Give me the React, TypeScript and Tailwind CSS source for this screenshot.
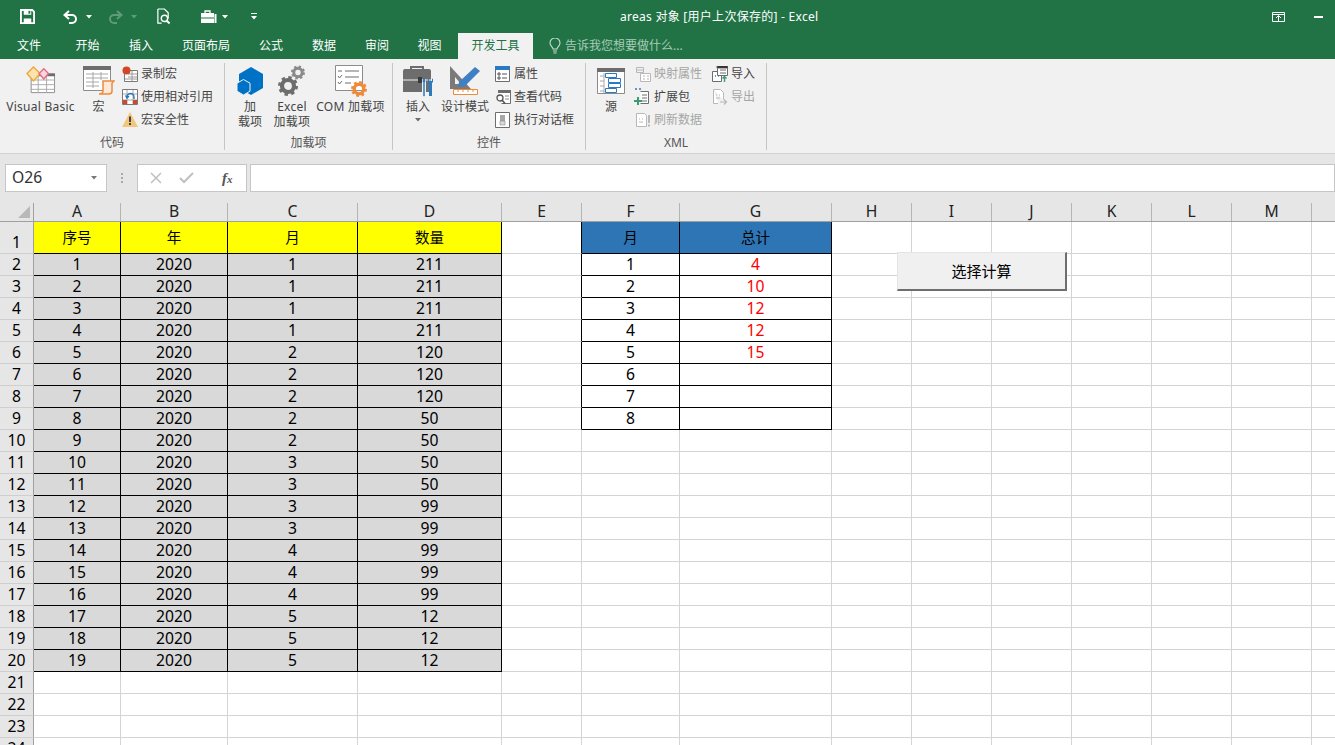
import type { ReactNode } from 'react';

const GRAY = '#6d6d6d';

const Gear = ({ x, y, r, color }: { x: number; y: number; r: number; color: string }) => (
  <g fill="none" stroke={color}>
    <circle cx={x} cy={y} r={r * 0.6} strokeWidth={r * 0.42} />
    <circle cx={x} cy={y} r={r * 0.84} strokeWidth={r * 0.32} strokeDasharray={`${r * 0.33} ${r * 0.33}`} />
  </g>
);

const Svg = ({ w, h, vw, vh, children, className }: { w: number; h: number; vw?: number; vh?: number; children: ReactNode; className?: string }) => (
  <svg width={w} height={h} viewBox={`0 0 ${vw ?? w} ${vh ?? h}`} className={className}>
    {children}
  </svg>
);

// quick access toolbar
const SaveIcon = () => (
  <Svg w={15} h={15} vw={16} vh={16}>
    <path d="M1 1h12l2 2v12H1z" fill="none" stroke="#fff" strokeWidth="2" />
    <path d="M4 1h8v5H4zM4 10h8v5H4z" fill="#fff" />
    <path d="M9 2h2v3H9z" fill="#217346" />
  </Svg>
);
const UndoIcon = ({ flip, color }: { flip?: boolean; color: string }) => (
  <Svg w={15} h={14} className={flip ? '-scale-x-100' : ''}>
    <path d="M6 1 1.5 5 6 9" fill="none" stroke={color} strokeWidth="2" />
    <path d="M2 5h7a4 4 0 0 1 4 4 4 4 0 0 1-4 4H6" fill="none" stroke={color} strokeWidth="2" />
  </Svg>
);
const PreviewIcon = () => (
  <Svg w={15} h={17} vw={16} vh={18}>
    <path d="M2 1h7l4 4v6M6 16H2V1" fill="none" stroke="#fff" strokeWidth="1.3" />
    <circle cx="9" cy="11" r="3.4" fill="none" stroke="#fff" strokeWidth="1.5" />
    <path d="m11.5 13.5 3 3" stroke="#fff" strokeWidth="2" />
  </Svg>
);
const CaseIcon = () => (
  <Svg w={18} h={14}>
    <path d="M1 3h13v10H1z" fill="#fff" />
    <path d="M5 3V1h5v2" fill="none" stroke="#fff" strokeWidth="1.3" />
    <path d="M1 8h13" stroke="#217346" />
    <path d="M15.5 4v9" stroke="#fff" strokeWidth="2" />
  </Svg>
);
const Caret = ({ color = '#fff' }: { color?: string }) => (
  <Svg w={6} h={4}>
    <path d="M0 0h6L3 3.5z" fill={color} />
  </Svg>
);

const RestoreIcon = () => (
  <Svg w={13} h={10}>
    <path d="M.5.5h12v9H.5zM0 2.5h13" fill="none" stroke="#fff" />
    <path d="M6.5 9.5V4M4 6l2.5-2.5L9 6" fill="none" stroke="#fff" />
  </Svg>
);

const BulbIcon = () => (
  <Svg w={12} h={16}>
    <path d="M4 11c0-2-3-3-3-6a5 5 0 0 1 10 0c0 3-3 4-3 6z" fill="none" stroke="#c8dccf" strokeWidth="1.1" />
    <path d="M4 13h4M4.5 15h3" stroke="#c8dccf" />
  </Svg>
);

// ribbon icons, code group
const VbIcon = () => (
  <Svg w={30} h={28} vw={32} vh={30} className="-mt-[3px]">
    <path d="M5.5 8.5h25v20h-25z" fill="#fff" stroke="#8c8c8c" />
    <path d="M5 8h26v3H5z" fill="#6d6d6d" />
    <path d="M5 15h26M5 20h26M5 25h26M13 11v18M22 11v18" stroke="#a8a8a8" />
    <path d="m8 1 7 7-7 8-7-8z" fill="#fbe3b0" stroke="#eba93c" strokeWidth="1.5" />
    <path d="m19 3 5 5-5 6-5-6z" fill="#fbd4dc" stroke="#e0708a" strokeWidth="1.5" />
  </Svg>
);
const MacroIcon = () => (
  <Svg w={32} h={30}>
    <path d="M.5.5h27v24H.5z" fill="#fff" stroke="#8c8c8c" />
    <path d="M0 0h28v4H0z" fill="#6d6d6d" />
    <path d="M3 8h22M3 12h22M3 16h13M3 20h13M10 6v16M18 6v8" stroke="#a8a8a8" />
    <path d="M20 15h11l-2 2v8c0 2-1 3-3 3H16c2 0 4-1 4-3z" fill="#fbeadb" stroke="#ed8b3b" strokeWidth="1.5" />
  </Svg>
);
const RecordIcon = () => (
  <Svg w={16} h={16}>
    <path d="M2.5 4.5h13v11h-13z" fill="#fff" stroke="#7a7a7a" />
    <path d="M6 8h9M6 11h9M3 13h12M10 5v10" stroke="#9a9a9a" />
    <circle cx="4.5" cy="4.5" r="4" fill="#d24726" />
  </Svg>
);
const RelativeIcon = () => (
  <Svg w={16} h={16}>
    <path d="M.5.5h15v15H.5z" fill="#fff" stroke="#7a7a7a" />
    <path d="M5 1v14M11 1v14M1 5h14M1 11h14" stroke="#a8a8a8" />
    <path d="M1 11h4v4H1zM11 11h4v4h-4z" fill="#d24726" />
    <path d="M5 8a3.5 3.5 0 0 1 7 0v2M3.5 6.5 5 9l2-2" fill="none" stroke="#2b79c2" strokeWidth="1.4" />
  </Svg>
);
const WarnIcon = () => (
  <Svg w={16} h={15}>
    <path d="M8 0 16 15H0z" fill="#f3c77b" />
    <path d="M7 4.5h2V10H7zM7 11h2v2H7z" fill="#444" />
  </Svg>
);

// add-ins group
const CubeIcon = () => (
  <Svg w={26} h={28}>
    <path d="m14 0 12 7v14l-12 7-12-7V7z" fill="#0072c6" />
    <path d="m6.5 12.5 6.5 3.7v8L6.5 28 0 24.2v-8z" fill="#0072c6" stroke="#f1f1f1" strokeWidth="1" />
  </Svg>
);
const GearsIcon = () => (
  <Svg w={28} h={32}>
    <Gear x={20} y={7.5} r={7} color="#8a8a8a" />
    <Gear x={10} y={21} r={10} color="#6d6d6d" />
  </Svg>
);
const ComIcon = () => (
  <Svg w={32} h={32}>
    <path d="M.5.5h27v25H.5z" fill="#fff" stroke="#8c8c8c" />
    <path d="M10 6h14M10 12h14M10 18h6" stroke="#6d6d6d" />
    <path d="M3 6h4M3 11l1.5 2L7 10M3 17l1.5 2L7 16" fill="none" stroke="#6d6d6d" />
    <Gear x={24} y={24} r={8} color="#ed8b3b" />
  </Svg>
);

// controls group
const InsertIcon = () => (
  <Svg w={31} h={31}>
    <path d="M0 5a2 2 0 0 1 2-2h24a2 2 0 0 1 2 2v21H0z" fill="#6d6d6d" />
    <path d="M8 3V1h12v2" fill="none" stroke="#6d6d6d" strokeWidth="2" />
    <path d="M0 14h28" stroke="#f1f1f1" />
    <path d="M15 11h4v6h-4z" fill="#3a3a3a" />
    <path d="M19 13h4v17h-4z" fill="#f1f1f1" />
    <path d="M20 13h2v3h-.5v14h-1V16H20z" fill="#2b79c2" strokeWidth=".5" stroke="#2b79c2" />
    <path d="M25 13v3l1 1v13h3V17l1-1v-3l-1-.5V15h-3v-2.5z" fill="#2b79c2" />
  </Svg>
);
const DesignIcon = () => (
  <Svg w={31} h={30}>
    <path d="M0 0v23h21z" fill="#7a7a7a" />
    <path d="M5 11v7h6z" fill="#f1f1f1" />
    <path d="m8 21 1-5L25 1l5 4-15 15z" fill="#3f80c4" />
    <path d="M3.5 23.5h24v5h-24z" fill="#fff" stroke="#ed8b3b" />
    <path d="M8 24v2M13 24v2M18 24v2M23 24v2" stroke="#ed8b3b" />
  </Svg>
);
const PropsIcon = () => (
  <Svg w={15} h={16}>
    <path d="M.5.5h14v15H.5z" fill="#fff" stroke="#6d6d6d" />
    <path d="M0 0h15v4H0z" fill="#2b79c2" />
    <path d="M3 7h2v2H3zM3 11h2v2H3z" fill="none" stroke="#555" />
    <path d="M7 8h5M7 12h5" stroke="#555" />
  </Svg>
);
const ViewCodeIcon = () => (
  <Svg w={16} h={16}>
    <path d="M3.5 1.5h12v13h-9" fill="#fff" stroke="#6d6d6d" />
    <path d="M3 1h13v3H3z" fill="#6d6d6d" />
    <path d="M10 7h4M10 10h4" stroke="#8c8c8c" />
    <circle cx="5" cy="9" r="3" fill="#fff" stroke="#555" strokeWidth="1.3" />
    <path d="m7 11 3 3.5" stroke="#555" strokeWidth="1.6" />
  </Svg>
);
const DialogIcon = () => (
  <Svg w={15} h={16}>
    <path d="M.5.5h14v15H.5z" fill="#fff" stroke="#6d6d6d" />
    <path d="M5 3h5v6H5z" fill="#a8a8a8" />
    <path d="M5 9h5v4H5z" fill="#d9d9d9" stroke="#8c8c8c" strokeWidth=".6" />
  </Svg>
);

// XML group
const SourceIcon = () => (
  <Svg w={29} h={27}>
    <path d="M.5.5h27v25H.5z" fill="#fff" stroke="#8c8c8c" />
    <path d="M0 0h28v4H0z" fill="#6d6d6d" />
    <path d="M3 8h4M3 13h4M3 18h4M3 23h4M7 5v20" stroke="#a8a8a8" />
    <path d="M8.5 5.5h11v4h-11zM8.5 20.5h11v4h-11z" fill="#fff" stroke="#2b79c2" />
    <path d="M11.5 10.5h12v4h-12zM11.5 15.5h12v4h-12z" fill="#fff" stroke="#2b79c2" />
  </Svg>
);
const MapIcon = () => (
  <Svg w={16} h={16}>
    <path d="M1.5 1.5h7v5h-7z" fill="none" stroke="#b8b8b8" />
    <path d="M5.5 7.5h10v8h-10z" fill="#fff" stroke="#b8b8b8" />
    <path d="M8 10h2M12 10h2M8 13h2M12 13h2M1 4h7" stroke="#b8b8b8" />
  </Svg>
);
const PackIcon = () => (
  <Svg w={17} h={17}>
    <path d="M6.5 3.5h8v12h-8" fill="#fff" stroke="#6d6d6d" />
    <path d="M8 7h5M8 10h5M8 13h5" stroke="#6d6d6d" />
    <path d="M1 1h2M5 1h2" stroke="#2b79c2" strokeWidth="1.4" />
    <path d="M3 9h2v3h3v2H5v3H3v-3H0v-2h3z" fill="#3d9a73" />
  </Svg>
);
const RefreshIcon = () => (
  <Svg w={16} h={16}>
    <path d="M1.5 1.5h8l2 2v11h-10z" fill="#fff" stroke="#b8b8b8" />
    <path d="M4 7h1M7 7h1M4 10h4" stroke="#b8b8b8" />
    <path d="M13 3h2v8h-2zM13 12.5h2v2h-2z" fill="#b8b8b8" />
  </Svg>
);
const ImportIcon = () => (
  <Svg w={16} h={16}>
    <path d="M.5 5.5h9v10h-9z" fill="#fff" stroke="#6d6d6d" />
    <path d="M5.5.5h10v9h-10z" fill="#fff" stroke="#6d6d6d" />
    <path d="M5 0h11v2H5zM8 4h6M8 7h6" stroke="#6d6d6d" />
    <path d="M3 10h1M6 10h1" stroke="#2b79c2" strokeWidth="1.4" />
    <path d="M12.5 16v-5M10.5 12.5l2-2 2 2" fill="none" stroke="#3d9a73" strokeWidth="1.4" />
  </Svg>
);
const ExportIcon = () => (
  <Svg w={16} h={16}>
    <path d="M1.5.5h7l3 3v7M6 14.5H1.5V.5" fill="#fff" stroke="#b8b8b8" />
    <path d="M4 6h1M7 6h1M4 9h4" stroke="#b8b8b8" />
    <path d="M8 13h6M12 10.5l2.5 2.5-2.5 2.5" fill="none" stroke="#b8b8b8" strokeWidth="1.2" />
  </Svg>
);

const Large = ({ w, icon, lines, caret, latin }: { w: string; icon: ReactNode; lines: string[]; caret?: boolean; latin?: boolean }) => (
  <div className={`${w} flex flex-col items-center shrink-0`}>
    <div className="h-[36px] flex items-center justify-center">{icon}</div>
    {lines.map((l) => (
      <div key={l} className={`h-[15px] leading-[15px] whitespace-nowrap ${latin ? 'tracking-[0.25px]' : ''}`}>{l}</div>
    ))}
    {caret && (
      <div className="mt-[4px] flex">
        <Caret color={GRAY} />
      </div>
    )}
  </div>
);

const Small = ({ icon, label, off }: { icon: ReactNode; label: string; off?: boolean }) => (
  <div className={`h-[23px] flex items-center gap-[3px] whitespace-nowrap ${off ? 'text-[#a6a6a6]' : ''}`}>
    <div className="w-[17px] flex justify-center shrink-0">{icon}</div>
    <span>{label}</span>
  </div>
);

const Group = ({ w, label, children }: { w: string; label: string; children: ReactNode }) => (
  <div className={`${w} h-[87px] mt-[4px] flex flex-col border-r border-[#c6c6c6] shrink-0`}>
    <div className="h-[73px] flex">{children}</div>
    <div className="h-[14px] leading-[14px] text-center text-[#555]">{label}</div>
  </div>
);

const tabs = [
  { t: '文件', w: 'w-[58px]' },
  { t: '开始', w: 'w-[59px]' },
  { t: '插入', w: 'w-[48px]' },
  { t: '页面布局', w: 'w-[82px]' },
  { t: '公式', w: 'w-[48px]' },
  { t: '数据', w: 'w-[58px]' },
  { t: '审阅', w: 'w-[48px]' },
  { t: '视图', w: 'w-[57px]' },
];

const columns = ['A', 'B', 'C', 'D', 'E', 'F', 'G', 'H', 'I', 'J', 'K', 'L', 'M', ''];
const gridCols =
  'grid grid-cols-[34px_87px_107px_130px_144px_80px_98px_152px_80px_80px_80px_80px_80px_80px_24px]';

const monthCol = [1, 1, 1, 1, 2, 2, 2, 2, 2, 3, 3, 3, 3, 4, 4, 4, 5, 5, 5];
const qtyCol = [211, 211, 211, 211, 120, 120, 120, 50, 50, 50, 50, 99, 99, 99, 99, 99, 12, 12, 12];
const totals = ['4', '10', '12', '12', '15'];

const Cell = ({ className, children }: { className?: string; children?: ReactNode }) => (
  <div className={`flex items-center justify-center border-r border-b border-[#d4d4d4] ${className ?? ''}`}>
    {children}
  </div>
);

const Row = ({ n }: { n: number }) => {
  const inLeft = n <= 20;
  const inRight = n <= 9;
  const leftCls = n === 1 ? 'bg-[#ffff00] border-black text-[14.5px]' : 'bg-[#d9d9d9] border-black';
  const rightCls = n === 1 ? 'bg-[#2e75b6] border-black text-[14.5px]' : 'border-black';
  const i = n - 2;
  const left =
    n === 1
      ? ['序号', '年', '月', '数量']
      : inLeft
        ? [String(n - 1), '2020', String(monthCol[i]), String(qtyCol[i])]
        : null;
  const right = n === 1 ? ['月', '总计'] : inRight ? [String(n - 1), totals[i] ?? ''] : null;

  return (
    <div className={`${gridCols} ${n === 1 ? 'h-[32px]' : 'h-[22px]'}`}>
      <div className="bg-[#e6e6e6] border-r border-b border-r-[#a0a0a0] border-b-[#cfcfcf] flex items-end justify-center leading-[21px]">
        {n}
      </div>
      {[0, 1, 2, 3].map((c) => (
        <Cell key={c} className={left ? leftCls : ''}>
          {left?.[c]}
        </Cell>
      ))}
      <Cell className={right ? 'border-r-black' : ''} />
      <Cell className={right ? rightCls : ''}>{right?.[0]}</Cell>
      <Cell className={`${right ? rightCls : ''} ${n > 1 ? 'text-[#ff0000]' : ''}`}>{right?.[1]}</Cell>
      {[0, 1, 2, 3, 4, 5, 6].map((c) => (
        <Cell key={c} />
      ))}
    </div>
  );
};

const rowNumbers = Array.from({ length: 24 }, (_, i) => i + 1);

export default function App() {
  return (
    <div className="w-[1335px] h-[745px] overflow-hidden bg-white text-black font-['Noto_Sans','Noto_Sans_CJK_SC',sans-serif]">
      {/* Title bar */}
      <div className="h-[33px] bg-[#217346] flex items-center text-white text-[12px]">
        <div className="w-[620px] flex items-center shrink-0">
          <div className="w-[20px]" />
          <SaveIcon />
          <div className="w-[28px]" />
          <UndoIcon color="#fff" />
          <div className="w-[8px]" />
          <Caret />
          <div className="w-[16px]" />
          <UndoIcon flip color="#5f9a7b" />
          <div className="w-[8px]" />
          <Caret color="#5f9a7b" />
          <div className="w-[19px]" />
          <PreviewIcon />
          <div className="w-[29px]" />
          <CaseIcon />
          <div className="w-[4px]" />
          <Caret />
          <div className="w-[23px]" />
          <div className="flex flex-col items-center gap-[2px]">
            <div className="w-[6px] h-px bg-white" />
            <Caret />
          </div>
        </div>
        <div className="w-[652px] whitespace-nowrap tracking-[0.27px]">areas 对象 [用户上次保存的] - Excel</div>
        <RestoreIcon />
        <div className="w-[29px]" />
        <div className="w-[9px] h-[2px] bg-white mt-px" />
      </div>

      {/* Tabs */}
      <div className="h-[26px] bg-[#217346] flex text-[12px] text-white">
        {tabs.map((tab) => (
          <div key={tab.t} className={`${tab.w} flex items-center justify-center`}>{tab.t}</div>
        ))}
        <div className="w-[75px] bg-[#f1f1f1] text-[#217346] flex items-center justify-center">开发工具</div>
        <div className="ml-[16px] flex items-center gap-[4px] text-[#a9cbb8]">
          <BulbIcon />
          <span>告诉我您想要做什么...</span>
        </div>
      </div>

      {/* Ribbon */}
      <div className="h-[95px] bg-[#f1f1f1] border-b border-[#d2d2d2] flex text-[12px] text-[#444]">
        <Group w="w-[225px]" label="代码">
          <Large w="w-[81px]" icon={<VbIcon />} lines={['Visual Basic']} latin />
          <Large w="w-[35px]" icon={<MacroIcon />} lines={['宏']} />
          <div className="ml-[5px] -mt-[1px]">
            <Small icon={<RecordIcon />} label="录制宏" />
            <Small icon={<RelativeIcon />} label="使用相对引用" />
            <Small icon={<WarnIcon />} label="宏安全性" />
          </div>
        </Group>
        <Group w="w-[168px]" label="加载项">
          <div className="w-[6px]" />
          <Large w="w-[38px]" icon={<CubeIcon />} lines={['加', '载项']} />
          <Large w="w-[46px]" icon={<GearsIcon />} lines={['Excel', '加载项']} latin />
          <Large w="w-[71px]" icon={<ComIcon />} lines={['COM 加载项']} latin />
        </Group>
        <Group w="w-[193px]" label="控件">
          <div className="w-[6px]" />
          <Large w="w-[38px]" icon={<InsertIcon />} lines={['插入']} caret />
          <Large w="w-[56px]" icon={<DesignIcon />} lines={['设计模式']} />
          <div className="ml-[1px] -mt-[1px]">
            <Small icon={<PropsIcon />} label="属性" />
            <Small icon={<ViewCodeIcon />} label="查看代码" />
            <Small icon={<DialogIcon />} label="执行对话框" />
          </div>
        </Group>
        <Group w="w-[181px]" label="XML">
          <div className="w-[6px]" />
          <Large w="w-[38px]" icon={<SourceIcon />} lines={['源']} />
          <div className="w-[77px] ml-[4px] -mt-[1px]">
            <Small icon={<MapIcon />} label="映射属性" off />
            <Small icon={<PackIcon />} label="扩展包" />
            <Small icon={<RefreshIcon />} label="刷新数据" off />
          </div>
          <div className="-mt-[1px]">
            <Small icon={<ImportIcon />} label="导入" />
            <Small icon={<ExportIcon />} label="导出" off />
          </div>
        </Group>
      </div>

      {/* Formula bar */}
      <div className="h-[49px] bg-[#e6e6e6] pt-[10px] flex items-start text-[15.7px]">
        <div className="ml-[5px] w-[102px] h-[28px] bg-white border border-[#c6c6c6] flex items-center justify-between pl-[6px] pr-[9px] text-[#333] shrink-0">
          <span>O26</span>
          <Caret color="#777" />
        </div>
        <div className="w-[30px] h-[28px] flex flex-col items-center justify-center gap-[2px] shrink-0">
          <div className="w-[2px] h-[2px] bg-[#a8a8a8]" />
          <div className="w-[2px] h-[2px] bg-[#a8a8a8]" />
          <div className="w-[2px] h-[2px] bg-[#a8a8a8]" />
        </div>
        <div className="w-[110px] h-[28px] bg-white border border-[#c6c6c6] flex items-center shrink-0">
          <svg width="12" height="12" viewBox="0 0 12 12" className="ml-[12px]">
            <path d="m1 1 10 10M11 1 1 11" stroke="#c0c0c0" strokeWidth="1.5" />
          </svg>
          <svg width="15" height="12" viewBox="0 0 15 12" className="ml-[17px]">
            <path d="m1 6 4 4 9-9" fill="none" stroke="#c0c0c0" strokeWidth="2" />
          </svg>
          <span className="ml-[28px] text-[15px] font-bold italic font-['Liberation_Serif',serif] text-[#555]">
            f<span className="text-[11px]">x</span>
          </span>
        </div>
        <div className="ml-[3px] flex-1 h-[28px] bg-white border border-[#c6c6c6]" />
      </div>

      {/* Sheet */}
      <div className="relative text-[15.7px] leading-none">
        <div className={`${gridCols} h-[19px] bg-[#e6e6e6] border-b border-[#a0a0a0] text-[#222]`}>
          <div className="border-r border-[#a0a0a0] flex items-end justify-end pr-[3px] pb-[3px]">
            <svg width="12" height="12" viewBox="0 0 12 12">
              <path d="M12 0v12H0z" fill="#b8b8b8" />
            </svg>
          </div>
          {columns.map((c, i) => (
            <div key={i} className="border-r border-[#b4b4b4] flex items-center justify-center">{c}</div>
          ))}
        </div>
        {rowNumbers.map((n) => (
          <Row key={n} n={n} />
        ))}
        <button className="absolute left-[897px] top-[49px] w-[170px] h-[39px] bg-[#f0f0f0] border-t border-l border-t-[#e4e4e4] border-l-[#e4e4e4] border-r-2 border-b-2 border-r-[#6e6e6e] border-b-[#6e6e6e] text-[15px] flex items-center justify-center">
          选择计算
        </button>
      </div>
    </div>
  );
}
